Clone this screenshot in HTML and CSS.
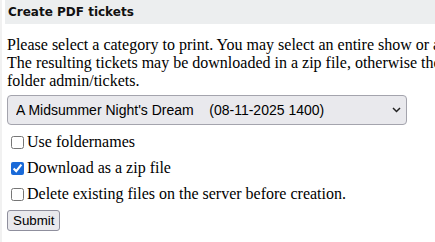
FILE: index.html
```html
<!DOCTYPE html>
<html>
<head>
<meta charset="utf-8">
<title>Create PDF tickets</title>
<link rel="stylesheet" href="styles.css">
</head>
<body>
<div class="page">
  <div class="header">Create PDF tickets</div>
  <div class="content">
    <p class="intro">Please select a category to print. You may select an entire show or a single performance.<br>The resulting tickets may be downloaded in a zip file, otherwise they will be stored in the<br>folder admin/tickets.</p>
    <form class="form">
      <div class="select-wrap">
        <select class="select" name="category">
          <option>A Midsummer Night's Dream&nbsp;&nbsp;&nbsp;&nbsp;(08-11-2025 1400)</option>
        </select>
        <svg class="chevron" width="9" height="6" viewBox="0 0 9 6"><path d="M1 1 L4.5 4.5 L8 1" fill="none" stroke="#222" stroke-width="1.5"/></svg>
      </div>
      <label class="opt"><input type="checkbox" class="cb"><span>Use foldernames</span></label>
      <label class="opt"><input type="checkbox" class="cb" checked><span>Download as a zip file</span></label>
      <label class="opt"><input type="checkbox" class="cb"><span>Delete existing files on the server before creation.</span></label>
      <button type="button" class="submit">Submit</button>
    </form>
  </div>
</div>
</body>
</html>
```

FILE: styles.css
```css
html, body {
  margin: 0;
  padding: 0;
  background: #ffffff;
  overflow: hidden;
}

body {
  font-family: "Liberation Serif", "Times New Roman", serif;
  font-size: 16px;
  color: #000;
}

.page {
  border-left: 2px solid #f1f1f1;
  min-height: 242px;
  width: 700px;
}

.header {
  margin-left: 3px;
  height: 24px;
  line-height: 24px;
  padding-left: 3px;
  background: #eceeef;
  font-family: "DejaVu Sans", Verdana, sans-serif;
  font-weight: bold;
  font-size: 12px;
  color: #111;
}

.content {
  padding-left: 5px;
}

.intro {
  margin: 12px 0 5px 0;
  line-height: 18px;
  white-space: nowrap;
}

.form {
  display: flex;
  flex-direction: column;
  align-items: flex-start;
}

.select-wrap {
  position: relative;
  width: 400px;
  margin-bottom: 4px;
}

.select {
  -webkit-appearance: none;
  appearance: none;
  width: 400px;
  height: 30px;
  margin: 0;
  padding: 0 24px 0 8px;
  border: 1px solid #a4a4ad;
  border-radius: 4px;
  background: #e9e9ed;
  font-family: "Liberation Sans", Arial, sans-serif;
  font-size: 14px;
  color: #000;
}

.chevron {
  position: absolute;
  right: 6px;
  top: 12px;
  pointer-events: none;
}

.opt {
  display: flex;
  align-items: center;
  height: 26px;
  line-height: 18px;
}

.cb {
  width: 13px;
  height: 13px;
  margin: 0 3px 0 4px;
  accent-color: #1a6ad8;
}

.submit {
  margin-top: 3px;
  height: 21px;
  padding: 0 5px;
  border: 1px solid #8f8f9d;
  border-radius: 3px;
  background: #e9e9ed;
  font-family: "Liberation Sans", Arial, sans-serif;
  font-size: 13.33px;
  color: #000;
}
```
